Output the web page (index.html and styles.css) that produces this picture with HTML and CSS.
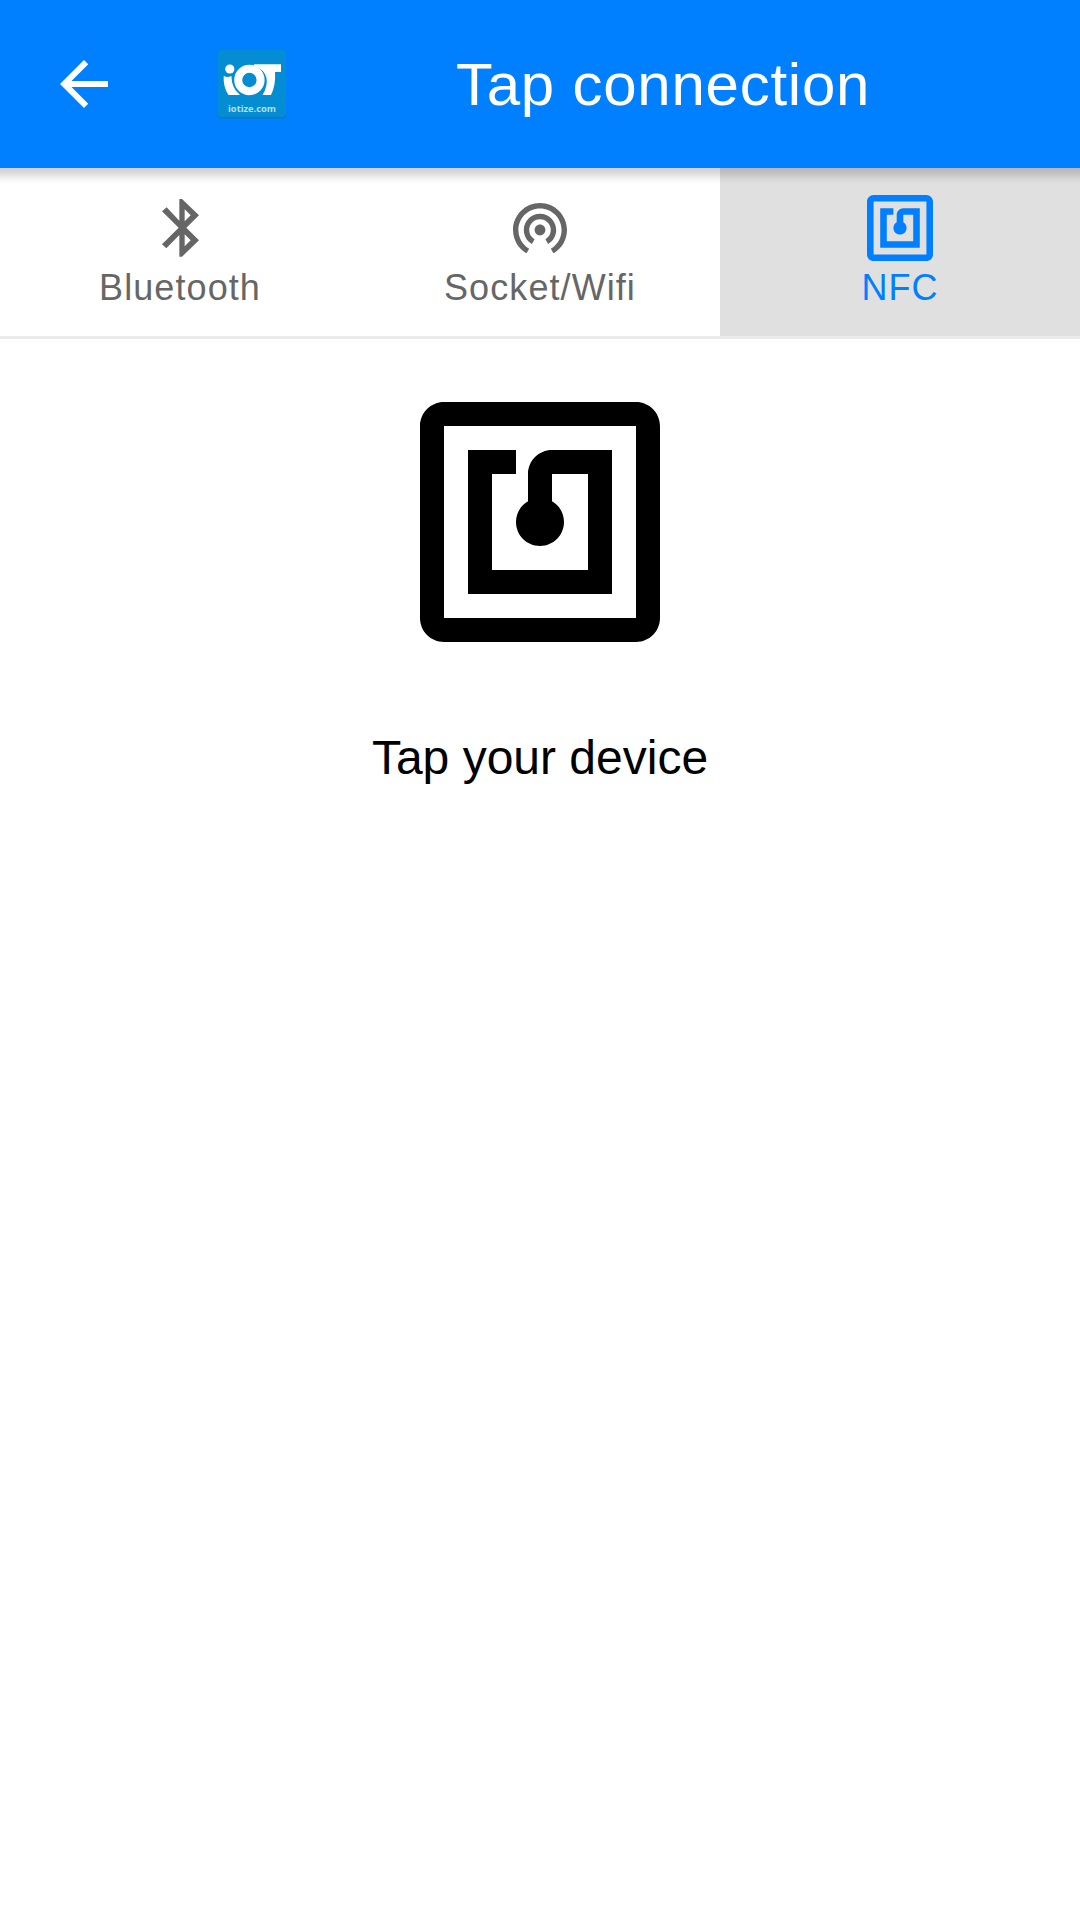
FILE: index.html
```html
<!DOCTYPE html>
<html lang="en">
<head>
<meta charset="utf-8">
<title>Tap connection</title>
<link rel="stylesheet" href="styles.css">
</head>
<body>
<header class="toolbar">
  <svg class="back" viewBox="0 0 24 24"><path d="M20 11H7.83l5.59-5.59L12 4l-8 8 8 8 1.41-1.41L7.83 13H20v-2z"/></svg>
  <svg class="logo" viewBox="0 0 68 68">
    <rect y="1" width="68" height="67.5" rx="4" fill="#0878bd"/>
    <rect width="68" height="67" rx="4" fill="#058dd3"/>
    <g fill="#fff">
      <circle cx="11.8" cy="19" r="4.6"/>
      <path d="M5.7 26Q9.500 28 13.400 26Q13.500 38 22 45H10.500Q5 37 5.700 26z"/>
      <path d="M36 14.300H63V22H57Q58 35 53 45H44.500Q50 36 48.500 28Q46 19 36 16z"/>
    </g>
    <circle cx="31.400" cy="30" r="11.200" fill="none" stroke="#fff" stroke-width="8"/>
    <text class="logo-text" x="34" y="61.500" text-anchor="middle" textLength="48" lengthAdjust="spacingAndGlyphs">iotize.com</text>
  </svg>
  <h1 class="title">Tap connection</h1>
</header>
<nav class="tabs">
  <div class="tab">
    <div class="tab-icon"><svg class="bluetooth" viewBox="20 18 111 173"><path fill-rule="evenodd" d="M72 18H80L131 67 93 104.500 131 142 80 191H72V126L33 166 20 154 70 104.500 20 55 34 43 72 83zM88 49V85L106 67zM88 124V160L106 142z"/></svg></div>
    <span class="label">Bluetooth</span>
  </div>
  <div class="tab">
    <div class="tab-icon"><svg class="wifi" viewBox="2 3 20 18.65"><path d="M12 11c-1.100 0-2 .9-2 2s.9 2 2 2 2-.9 2-2-.9-2-2-2zm6 2c0-3.310-2.690-6-6-6s-6 2.690-6 6c0 2.220 1.210 4.150 3 5.190l1-1.740c-1.190-.7-2-1.970-2-3.450 0-2.210 1.790-4 4-4s4 1.790 4 4c0 1.480-.81 2.750-2 3.450l1 1.740c1.790-1.040 3-2.970 3-5.190zM12 3C6.480 3 2 7.480 2 13c0 3.700 2.010 6.920 4.990 8.650l1-1.730C5.610 18.530 4 15.960 4 13c0-4.420 3.580-8 8-8s8 3.580 8 8c0 2.960-1.610 5.530-4 6.920l1 1.730c2.990-1.730 5-4.950 5-8.650 0-5.520-4.480-10-10-10z"/></svg></div>
    <span class="label">Socket/Wifi</span>
  </div>
  <div class="tab active">
    <div class="tab-icon"><svg class="nfc" viewBox="2 2 20 20"><path d="M20 2H4c-1.100 0-2 .9-2 2v16c0 1.100.9 2 2 2h16c1.100 0 2-.9 2-2V4c0-1.100-.9-2-2-2zm0 18H4V4h16v16zM18 6h-5c-1.100 0-2 .9-2 2v2.280c-.6.35-1 .98-1 1.720 0 1.100.9 2 2 2s2-.9 2-2c0-.74-.4-1.380-1-1.720V8h3v8H8V8h2V6H6v12h12V6z"/></svg></div>
    <span class="label">NFC</span>
  </div>
</nav>
<main class="content">
  <svg class="nfc-large" viewBox="2 2 20 20"><path d="M20 2H4c-1.100 0-2 .9-2 2v16c0 1.100.9 2 2 2h16c1.100 0 2-.9 2-2V4c0-1.100-.9-2-2-2zm0 18H4V4h16v16zM18 6h-5c-1.100 0-2 .9-2 2v2.280c-.6.35-1 .98-1 1.720 0 1.100.9 2 2 2s2-.9 2-2c0-.74-.4-1.380-1-1.720V8h3v8H8V8h2V6H6v12h12V6z"/></svg>
  <p class="hint">Tap your device</p>
</main>
</body>
</html>
```

FILE: styles.css
```css
* { box-sizing: border-box; }
body {
  margin: 0;
  min-height: 1920px;
  background: #fff;
  color: #000;
  font-family: "Liberation Sans", Arial, sans-serif;
}
svg { display: block; flex: none; fill: currentColor; }
.toolbar {
  position: relative;
  z-index: 1;
  display: flex;
  align-items: center;
  height: 168px;
  padding-left: 48px;
  background: #0080ff;
  color: #fff;
}
.toolbar::after {
  content: "";
  position: absolute;
  top: 100%;
  left: 0;
  width: 100%;
  height: 16px;
  background: linear-gradient(rgba(0, 0, 0, .19), rgba(0, 0, 0, .14) 30%, rgba(0, 0, 0, .05) 65%, transparent);
}
.back { width: 72px; height: 72px; }
.logo { width: 68px; height: 68px; margin-left: 98px; overflow: visible; }
.logo-text { font: bold 9.500px "Open Sans", sans-serif; fill: #b5e0f5; }
.title {
  margin: 0 0 0 170px;
  padding-top: 2px;
  font-size: 60px;
  font-weight: 400;
  line-height: 72px;
  letter-spacing: .75px;
  white-space: nowrap;
}
.tabs {
  display: grid;
  grid-template-columns: repeat(3, 1fr);
  height: 171px;
  border-bottom: 3px solid #ebebeb;
}
.tab {
  display: flex;
  flex-direction: column;
  align-items: center;
  padding-top: 24px;
  color: #666;
}
.tab.active { background: #e0e0e0; color: #0080ff; }
.tab-icon { height: 72px; display: flex; align-items: center; }
.bluetooth { width: 37px; height: 57.700px; }
.wifi { width: 54px; height: 50.350px; }
.nfc { width: 66px; height: 66px; }
.label {
  margin-top: 3px;
  font-size: 36px;
  line-height: 42px;
  letter-spacing: 1.080px;
}
.content {
  display: flex;
  flex-direction: column;
  align-items: center;
  padding-top: 63px;
}
.nfc-large { width: 240px; height: 240px; }
.hint { margin: 88px 0 0; font-size: 48px; line-height: 56px; }
```
